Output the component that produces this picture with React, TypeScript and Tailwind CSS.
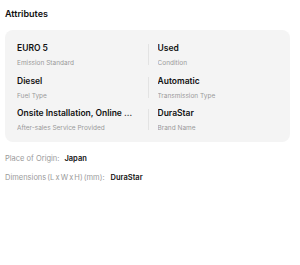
import React from 'react';

type Attr = { value: string; label: string };

const attrs: Attr[] = [
  { value: 'EURO 5', label: 'Emission Standard' },
  { value: 'Used', label: 'Condition' },
  { value: 'Diesel', label: 'Fuel Type' },
  { value: 'Automatic', label: 'Transmission Type' },
  { value: 'Onsite Installation, Online support', label: 'After-sales Service Provided' },
  { value: 'DuraStar', label: 'Brand Name' },
];

const AttrCell: React.FC<{ attr: Attr; right?: boolean }> = ({ attr, right }) => (
  <div className={right ? 'flex items-center gap-[9px] min-w-0' : 'flex items-center min-w-0 pr-[13px]'}>
    {right && <div className="w-px h-[21px] bg-[#e3e3e3] shrink-0" />}
    <div className="min-w-0 flex-1">
      <div className="text-[8.5px] leading-[15px] font-semibold text-[#111] truncate">{attr.value}</div>
      <div className="mt-[2px] text-[6.5px] leading-[10px] text-[#9a9a9a] truncate">{attr.label}</div>
    </div>
  </div>
);

export default function App() {
  return (
    <div className="w-[300px] h-[265px] bg-white px-[5px] pt-[8px] font-['Inter',sans-serif]">
      <h2 className="text-[9px] leading-[12px] font-semibold text-[#111]">Attributes</h2>
      <div className="mt-[10px] w-[285px] rounded-[8px] bg-[#f4f4f4] pl-[12px] pr-[12px] pt-[11px] pb-[9px]">
        <div className="grid grid-cols-2 gap-y-[5.5px]">
          {attrs.map((a, i) => (
            <AttrCell key={i} attr={a} right={i % 2 === 1} />
          ))}
        </div>
      </div>
      <div className="mt-[12px] space-y-[9px] text-[7.5px] leading-[10px]">
        <div className="flex gap-[5px]">
          <span className="text-[#9a9a9a]">Place of Origin:</span>
          <span className="font-semibold text-[#111]">Japan</span>
        </div>
        <div className="flex gap-[6px]">
          <span className="text-[#9a9a9a] [word-spacing:-1px]">Dimensions (L x W x H) (mm):</span>
          <span className="font-semibold text-[#111]">DuraStar</span>
        </div>
      </div>
    </div>
  );
}
